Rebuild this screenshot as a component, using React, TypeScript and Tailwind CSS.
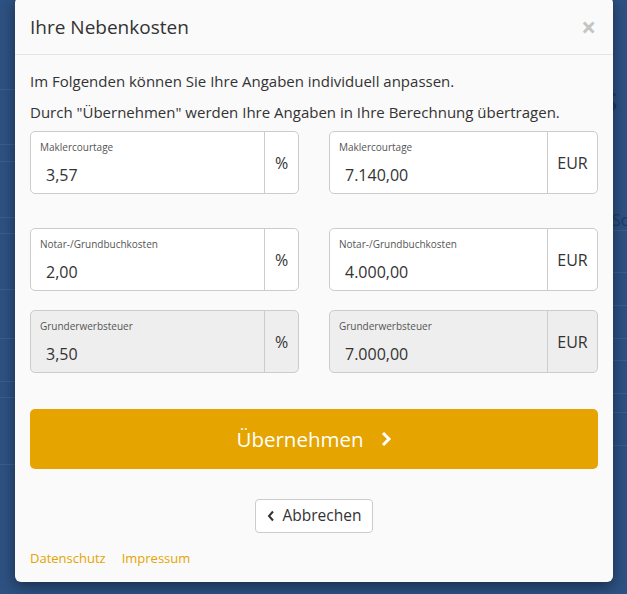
import React from "react";

const font = { fontFamily: '"Open Sans", "Liberation Sans", sans-serif' };

function Field({
	label,
	value,
	unit,
	disabled,
}: {
	label: string;
	value: string;
	unit: string;
	disabled?: boolean;
}) {
	return (
		<div
			className={`flex h-[63px] w-[269px] rounded-[5px] border border-[#cccccc] ${
				disabled ? "bg-[#eeeeee]" : "bg-white"
			}`}
		>
			<div className="flex flex-1 flex-col pl-[9px] pt-[8px]">
				<span className="text-[10px] leading-[14px] text-[#555]">{label}</span>
				<span className="mt-[11px] pl-[6px] text-[16px] leading-[20px] text-[#333]">{value}</span>
			</div>
			<div
				className={`flex items-center justify-center border-l border-[#cccccc] text-[16px] text-[#333] ${
					unit === "%" ? "w-[34px]" : "w-[50px]"
				}`}
			>
				{unit}
			</div>
		</div>
	);
}

function Lines({ stops }: { stops: number[] }) {
	let prev = 0;
	return (
		<div className="flex flex-col">
			{stops.map((y) => {
				const h = y - prev;
				prev = y;
				return <div key={y} className="border-b border-[#3b5e8e]" style={{ height: h }} />;
			})}
		</div>
	);
}

export default function App() {
	return (
		<div className="relative h-[594px] w-[627px] overflow-hidden bg-[#2d5182]" style={font}>
			{/* page behind the overlay */}
			<div className="flex h-full">
				<div className="w-[120px]">
					<Lines stops={[90, 145, 162, 218, 234, 290, 339, 382, 398, 465]} />
				</div>
				<div className="flex flex-1 flex-col items-end">
					<div className="mt-[86px] w-[24px] text-[26px] font-semibold leading-[30px] text-[#1d3b69]">S</div>
					<div className="mt-[94px] w-[15px] overflow-hidden whitespace-nowrap text-[16px] leading-[20px] text-[#1d3b69]">So</div>
					<div className="w-full">
						<Lines stops={[0, 42, 75, 108, 130, 163, 182, 215]} />
					</div>
				</div>
			</div>

			{/* modal */}
			<div className="absolute left-[15px] top-[-3px] flex w-[598px] flex-col rounded-[6px] bg-[#fafafa] shadow-[0_4px_14px_rgba(0,0,0,0.45)]">
				<div className="flex h-[58px] items-center justify-between border-b border-[#e5e5e5] pl-[15px] pr-[17px] pt-[3px]">
					<h4 className="text-[19px] text-[#333]">Ihre Nebenkosten</h4>
					<span className="text-[26px] font-bold leading-none text-[#c4c4c4]">×</span>
				</div>

				<div className="flex flex-col px-[15px] pt-[15px]">
					<p className="text-[15px] leading-[22px] text-[#333]">
						Im Folgenden können Sie Ihre Angaben individuell anpassen.
					</p>
					<p className="mt-[9px] text-[15px] leading-[22px] text-[#333]">
						Durch "Übernehmen" werden Ihre Angaben in Ihre Berechnung übertragen.
					</p>

					<div className="mt-[8px] flex justify-between">
						<Field label="Maklercourtage" value="3,57" unit="%" />
						<Field label="Maklercourtage" value="7.140,00" unit="EUR" />
					</div>
					<div className="mt-[34px] flex justify-between">
						<Field label="Notar-/Grundbuchkosten" value="2,00" unit="%" />
						<Field label="Notar-/Grundbuchkosten" value="4.000,00" unit="EUR" />
					</div>
					<div className="mt-[19px] flex justify-between">
						<Field label="Grunderwerbsteuer" value="3,50" unit="%" disabled />
						<Field label="Grunderwerbsteuer" value="7.000,00" unit="EUR" disabled />
					</div>

					<button className="mt-[36px] flex h-[60px] items-center justify-center gap-[16px] rounded-[5px] bg-[#e5a400] text-[20.5px] text-white">
						Übernehmen
						<svg width="12" height="16" viewBox="0 0 12 16" fill="none">
							<path d="M3 2l6 6-6 6" stroke="white" strokeWidth="3" />
						</svg>
					</button>

					<div className="mt-[30px] flex justify-center">
						<button className="flex h-[34px] items-center gap-[8px] rounded-[4px] border border-[#cccccc] bg-white px-[11px] text-[15.5px] text-[#333]">
							<svg width="8" height="12" viewBox="0 0 8 12" fill="none">
								<path d="M6 1.5L2 6l4 4.5" stroke="#333" strokeWidth="2" />
							</svg>
							Abbrechen
						</button>
					</div>

					<div className="mt-[14px] flex gap-[16px] pb-[13px] text-[13px] leading-[22px] text-[#e5a400]">
						<span>Datenschutz</span>
						<span>Impressum</span>
					</div>
				</div>
			</div>
		</div>
	);
}
